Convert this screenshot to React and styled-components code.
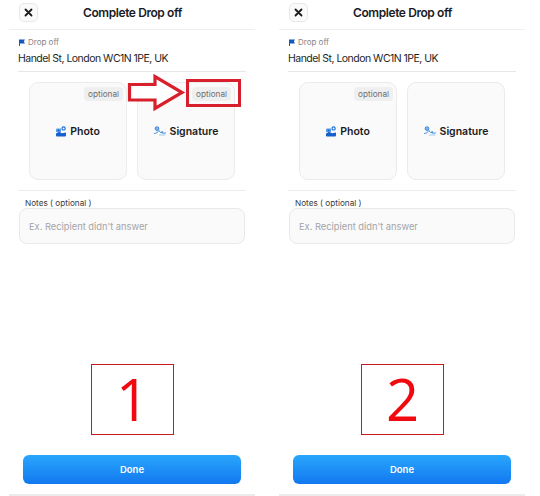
import styled, { createGlobalStyle } from "styled-components";

const Global = createGlobalStyle`
	html, body {
		margin: 0;
		padding: 0;
		background: #fff;
	}
	* {
		box-sizing: border-box;
	}
`;

const Page = styled.div`
	width: 540px;
	height: 496px;
	display: grid;
	grid-template-columns: 270px 270px;
	font-family: Inter, "Liberation Sans", sans-serif;
	overflow: hidden;
`;

const Panel = styled.div`
	position: relative;
	height: 496px;
	display: flex;
	flex-direction: column;
	width: 270px;
`;

const Header = styled.div`
	height: 30px;
	margin: 0 15px 0 9px;
	padding: 3px 0 0 10px;
	display: flex;
	align-items: flex-start;
	border-bottom: 1px solid #efefef;
`;

const CloseButton = styled.div`
	width: 19px;
	height: 19px;
	border: 1px solid #e8e8e8;
	border-radius: 5px;
	background: #fafafa;
	display: flex;
	align-items: center;
	justify-content: center;
`;

const Title = styled.div`
	margin-left: 45px;
	font-size: 12px;
	letter-spacing: -0.42px;
	line-height: 19px;
	font-weight: 600;
	color: #1b1b1f;
`;

const Address = styled.div`
	height: 42px;
	margin: 0 24px 0 18px;
	padding: 7px 0 0 1px;
	border-bottom: 1px solid #e6e6e6;
`;

const AddressLabel = styled.div`
	display: flex;
	align-items: center;
	gap: 3px;
	font-size: 8px;
	line-height: 11px;
	color: #85858b;
`;

const AddressLine = styled.div`
	margin: 4px 0 0 -1px;
	font-size: 10.5px;
	letter-spacing: -0.52px;
	line-height: 14px;
	color: #1f1f24;
`;

const Tiles = styled.div`
	display: grid;
	grid-template-columns: 98px 98px;
	gap: 10px;
	padding: 10px 0 0 29px;
`;

const Tile = styled.div`
	position: relative;
	height: 98px;
	border: 1px solid #ebebeb;
	border-radius: 9px;
	background: #fafafa;
	display: flex;
	align-items: center;
	justify-content: center;
	gap: 4px;
	font-size: 10.5px;
	font-weight: 600;
	color: #1b1b1f;
`;

const Badge = styled.span`
	position: absolute;
	top: 4px;
	right: 3px;
	height: 14px;
	padding: 0 4px;
	border-radius: 4px;
	background: #efefef;
	font-size: 8.2px;
	font-weight: 400;
	line-height: 14px;
	color: #6d6d72;
`;

const Divider = styled.div`
	height: 1px;
	margin: 10px 24px 0 18px;
	background: #ececec;
`;

const NotesLabel = styled.div`
	margin: 8px 0 0 25px;
	font-size: 8.2px;
	line-height: 9px;
	color: #3a3a3f;
`;

const NotesInput = styled.div`
	height: 36px;
	margin: 0 25px 0 19px;
	padding-left: 9px;
	border: 1px solid #e9e9e9;
	border-radius: 8px;
	background: #fafafa;
	font-size: 9.3px;
	line-height: 35px;
	color: #a4a4a8;
`;

const NumberBox = styled.div`
	width: 83px;
	height: 71px;
	margin: 120px 0 0 91px;
	padding-bottom: 2px;
	border: 1px solid #c8191e;
	display: flex;
	align-items: center;
	justify-content: center;
	font-family: "Open Sans", "Liberation Sans", sans-serif;
	font-size: 58px;
	color: #f00a10;
`;

const DoneButton = styled.div`
	width: 218px;
	height: 29px;
	margin: 20px 0 0 23px;
	border-radius: 6px;
	background: linear-gradient(#29a6fc, #1278f0);
	text-align: center;
	font-size: 9.5px;
	font-weight: 600;
	line-height: 29px;
	color: #fff;
`;

const HomeBar = styled.div`
	height: 2px;
	margin: 10px 15px 0 9px;
	background: #ececec;
`;

const Callout = styled.div`
	position: absolute;
	top: 79px;
	left: 186px;
	width: 55px;
	height: 28px;
	border: 3px solid #d8202c;
`;

const ArrowSvg = styled.svg`
	position: absolute;
	top: 73px;
	left: 127px;
`;

const Flag = () => (
	<svg width="6" height="7" viewBox="0 0 6 7">
		<path d="M0 0.5H6L4.8 2.5L6 4.5H1V7H0Z" fill="#1557c0" />
	</svg>
);

const CloseIcon = () => (
	<svg width="9" height="9" viewBox="0 0 9 9">
		<path d="M1.5 1.5L7.5 7.5M7.5 1.5L1.5 7.5" stroke="#1b1b1f" strokeWidth="1.8" strokeLinecap="round" />
	</svg>
);

const PhotoIcon = () => (
	<svg width="10" height="11" viewBox="0 0 10 11">
		<path d="M0 3.5Q0 2.5 1 2.5H5V6H0Z" fill="#5a9be8" />
		<circle cx="2.6" cy="4.3" r="0.9" fill="#1a5fc8" />
		<circle cx="7.6" cy="2.4" r="1.6" fill="none" stroke="#1a6fd8" strokeWidth="1.2" />
		<path d="M0 7.5L3 5.8L6 7.2L10 6.5V9.5Q10 10.5 9 10.5H1Q0 10.5 0 9.5Z" fill="#1560cc" />
	</svg>
);

const SignatureIcon = () => (
	<svg width="12" height="10" viewBox="0 0 12 10" fill="none">
		<circle cx="3" cy="2.6" r="1.9" fill="#7db2ec" stroke="#2e7fd8" strokeWidth="0.8" />
		<path d="M0.5 7.5C2.5 7.5 4 6 5 4.5C5.5 6 7 7 8.5 6.5C9.5 6.2 8.5 5 7.5 5.8C7 6.5 8.5 7.8 11.5 7" stroke="#2e7fd8" strokeWidth="0.9" strokeLinecap="round" />
		<path d="M5 9H11.5" stroke="#8dbbee" strokeWidth="0.8" />
	</svg>
);

const Arrow = () => (
	<ArrowSvg width="60" height="40" viewBox="0 0 60 40">
		<path d="M2.5 11.5H28V3.5L55 19.5L28 35.5V27H2.5Z" fill="#fff" stroke="#d8202c" strokeWidth="3.2" />
	</ArrowSvg>
);

const Screen = ({ number, annotated }) => (
	<Panel>
		<Header>
			<CloseButton>
				<CloseIcon />
			</CloseButton>
			<Title>Complete Drop off</Title>
		</Header>
		<Address>
			<AddressLabel>
				<Flag />
				Drop off
			</AddressLabel>
			<AddressLine>Handel St, London WC1N 1PE, UK</AddressLine>
		</Address>
		<Tiles>
			<Tile>
				<Badge>optional</Badge>
				<PhotoIcon />
				Photo
			</Tile>
			<Tile>
				{annotated && <Badge>optional</Badge>}
				<SignatureIcon />
				Signature
			</Tile>
		</Tiles>
		<Divider />
		<NotesLabel>Notes ( optional )</NotesLabel>
		<NotesInput>Ex. Recipient didn't answer</NotesInput>
		<NumberBox>{number}</NumberBox>
		<DoneButton>Done</DoneButton>
		<HomeBar />
		{annotated && <Arrow />}
		{annotated && <Callout />}
	</Panel>
);

export default function App() {
	return (
		<Page>
			<Global />
			<Screen number="1" annotated />
			<Screen number="2" />
		</Page>
	);
}
